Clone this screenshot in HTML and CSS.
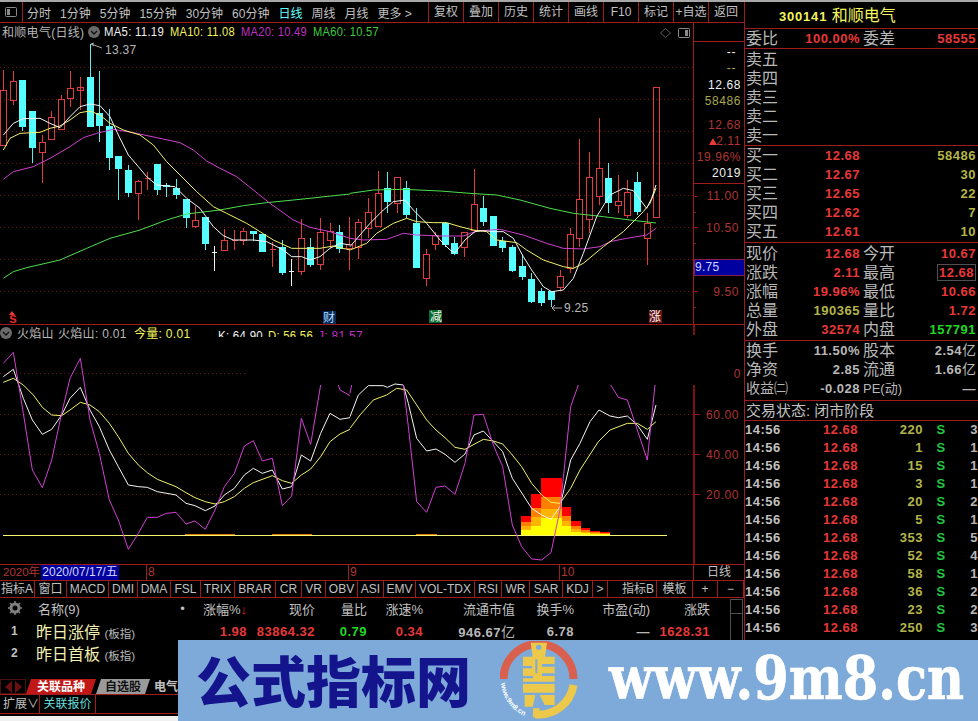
FILE: index.html
```html
<!DOCTYPE html>
<html lang="zh-CN">
<head>
    <meta charset="UTF-8">
    <title>和顺电气 日线</title>
    <link rel="stylesheet" href="styles.css">
</head>
<body>
<div class="app">
    <div class="left">
        <div class="toolbar">
            <div class="tool-icon"><svg width="12" height="10" viewBox="0 0 12 10"><rect class="ico-box" x=".5" y=".5" width="11" height="9" rx="1"/><rect class="ico-fill" x="2" y="2" width="3" height="6"/></svg></div>
            <div class="periods">
                <span>分时</span><span>1分钟</span><span>5分钟</span><span>15分钟</span><span>30分钟</span><span>60分钟</span><span class="on">日线</span><span>周线</span><span>月线</span><span>更多 &gt;</span>
            </div>
            <span class="tool">复权</span><span class="tool">叠加</span><span class="tool">历史</span><span class="tool">统计</span><span class="tool">画线</span><span class="tool">F10</span><span class="tool">标记</span><span class="tool">+自选</span><span class="tool">返回</span>
        </div>

        <svg class="chart" width="744" height="541" viewBox="0 23 744 541">
            <!-- grid -->
            <path class="grid" d="M0 67.5H693M0 99.5H693M0 131.5H693M0 163.5H693M0 195.5H693M0 227.5H693M0 259.5H693M0 291.5H693M0 373.5H245M0 414.5H693M0 454.5H693M0 494.5H693"/>

            <!-- candles -->
            <path class="wick-dn" d="M22.5 80V131M32.5 111V163M90.5 44V127M99.5 71V142M109.5 109V170M118.5 156V200M128.5 165V197M157.5 164V195M166.5 183V197M176.5 179V199M186.5 199V228M205.5 217V250M253.5 231V241M282.5 240V275M310.5 238V267M339.5 225V253M387.5 172V213M406.5 181V218M416.5 208V268M445.5 222V247M454.5 237V255M483.5 196V226M502.5 237V252M512.5 245V272M522.5 255V280M531.5 273V303M541.5 288V306M551.5 291V307M608.5 163V213M637.5 172V215"/>
            <path class="body-dn" d="M19 80h7v47h-7zM29 111h7v37h-7zM87 77h7v50h-7zM96 113h7v13h-7zM106 126h7v32h-7zM115 156h7v13h-7zM125 170h7v23h-7zM154 164h7v26h-7zM163 185h7v2h-7zM173 188h7v7h-7zM183 199h7v19h-7zM202 217h7v27h-7zM250 231h7v3h-7zM259 234h7v18h-7zM279 247h7v26h-7zM307 247h7v18h-7zM336 232h7v17h-7zM384 188h7v14h-7zM403 188h7v27h-7zM413 223h7v45h-7zM442 223h7v22h-7zM451 243h7v11h-7zM480 208h7v14h-7zM490 216h7v30h-7zM499 241h7v7h-7zM509 247h7v24h-7zM519 266h7v11h-7zM528 279h7v23h-7zM538 291h7v12h-7zM548 291h7v9h-7zM605 178h7v25h-7zM634 182h7v30h-7z"/>
            <path class="candle-up" d="M3.5 70V90M.5 90h6V145h-6zM13.5 71V81M13.5 100V105M10.5 81h6V100h-6zM42.5 135V142M42.5 152V183M39.5 142h6V152h-6zM51.5 111V117M48.5 117h6V139h-6zM61.5 95V99M58.5 99h6V129h-6zM70.5 71V88M70.5 98V107M67.5 88h6V98h-6zM80.5 77V110M77.5 87h6V90h-6zM138.5 180V181M138.5 193V220M135.5 181h6V193h-6zM147.5 172V190M144.5 178h6M195.5 206V220M195.5 226V228M192.5 220h6V226h-6zM224.5 229V240M221.5 240h6V250h-6zM234.5 230V250M231.5 240h6M243.5 228V231M243.5 240V245M240.5 231h6V240h-6zM272.5 242V267M269.5 249h6M301.5 219V238M301.5 271V275M298.5 238h6V271h-6zM320.5 218V232M320.5 264V270M317.5 232h6V264h-6zM330.5 223V231M330.5 240V248M327.5 231h6V240h-6zM349.5 217V244M349.5 248V270M346.5 244h6V248h-6zM358.5 219V222M358.5 247V259M355.5 222h6V247h-6zM368.5 198V212M368.5 228V238M365.5 212h6V228h-6zM378.5 171V193M375.5 193h6V226h-6zM397.5 203V213M394.5 177h6V203h-6zM426.5 249V254M426.5 278V286M423.5 254h6V278h-6zM435.5 232V235M435.5 244V250M432.5 235h6V244h-6zM464.5 247V257M461.5 232h6V247h-6zM474.5 169V204M474.5 230V233M471.5 204h6V230h-6zM560.5 270V276M560.5 287V290M557.5 276h6V287h-6zM570.5 228V234M570.5 268V273M567.5 234h6V268h-6zM579.5 139V199M579.5 238V247M576.5 199h6V238h-6zM589.5 152V177M589.5 219V233M586.5 177h6V219h-6zM599.5 118V168M599.5 196V205M596.5 168h6V196h-6zM618.5 175V201M618.5 205V213M615.5 201h6V205h-6zM627.5 180V192M627.5 215V218M624.5 192h6V215h-6zM647.5 213V223M647.5 238V265M644.5 223h6V238h-6zM653.5 87h6V217h-6z"/>
            <path class="candle-white" d="M214.5 246V271M212 252.5h5M291.5 259V286M289 271.5h5"/>

            <!-- MA lines, left half -->
            <g transform="translate(0 60) scale(.33333)">
                <polyline class="ln ln-green" points="10,655 40,635 80,623 180,600 260,565 330,535 420,510 500,480 560,462 660,450 730,437 800,428 900,418 1050,402"/>
                <polyline class="ln ln-mag" points="10,358 40,335 100,320 150,295 210,260 250,233 290,220 340,208 400,218 470,233 540,248 580,270 620,303 660,325 710,350 760,390 810,430 880,480 930,502 990,515 1050,535"/>
                <polyline class="ln ln-yel" points="10,270 30,235 60,220 120,217 150,205 180,198 210,180 240,158 270,153 300,165 330,190 370,210 420,225 460,255 500,305 540,345 590,395 640,440 680,460 740,490 780,515 820,540 875,565 960,565 1000,558 1050,570"/>
                <polyline class="ln ln-white" points="10,225 40,190 70,176 120,175 150,190 180,203 210,170 240,140 270,132 300,137 330,170 355,225 385,285 415,320 440,350 470,375 525,380 560,415 600,445 640,500 670,527 700,540 760,540 800,545 850,570 875,590 905,590 930,600 960,590 990,565 1020,550 1050,555"/>
            </g>
            <!-- MA lines, right half -->
            <g transform="translate(350 100) scale(.33333)">
                <polyline class="ln ln-green" points="0,280 70,270 160,268 270,273 360,280 440,285 510,300 600,325 670,340 760,350 840,360 918,369"/>
                <polyline class="ln ln-mag" points="0,415 40,420 110,418 160,400 200,405 270,408 340,408 380,393 450,388 520,405 590,430 640,445 700,447 750,440 780,425 830,415 890,405 918,385"/>
                <polyline class="ln ln-yel" points="0,450 50,430 80,400 130,370 170,355 200,365 250,368 290,368 330,380 370,390 410,395 440,420 500,428 530,450 580,480 640,500 670,505 700,490 760,440 820,395 880,335 900,310 918,265"/>
                <polyline class="ln ln-white" points="0,440 30,405 60,370 100,330 130,305 165,300 190,330 230,370 270,420 300,450 315,458 345,420 375,395 400,392 430,395 460,395 490,415 520,470 545,510 580,560 605,575 640,570 670,535 700,460 740,350 780,285 820,265 850,272 890,325 905,295 918,255"/>
            </g>

            <!-- price legend -->
            <text class="t t-grey" x="2" y="37">和顺电气(日线)</text>
            <circle class="knob" cx="94" cy="32" r="6"/><path class="knob-mark" d="M91 31l3 3 3-3"/>
            <text class="t t-white" x="104" y="36" textLength="60" lengthAdjust="spacingAndGlyphs">MA5: 11.19</text>
            <text class="t t-yel" x="170" y="36" textLength="65" lengthAdjust="spacingAndGlyphs">MA10: 11.08</text>
            <text class="t t-mag" x="241" y="36" textLength="66" lengthAdjust="spacingAndGlyphs">MA20: 10.49</text>
            <text class="t t-green" x="313" y="36" textLength="66" lengthAdjust="spacingAndGlyphs">MA60: 10.57</text>
            <path class="diamond" d="M665.5 28.5l5 4.5-5 4.5-5-4.5z"/>
            <rect class="ico-box" x="678.5" y="28.5" width="11" height="9" rx="1"/><rect class="ico-fill" x="685" y="30" width="3" height="6"/>

            <path class="pointer" d="M91 44l3-1M91 44l3 2M91 44l11 4M552 308l3-3M552 308l3 3M552 308h10"/>
            <text class="t t-grey" x="105" y="54">13.37</text>
            <text class="t t-grey" x="564" y="312">9.25</text>

            <!-- signals -->
            <path class="tri" d="M12 311l3 4h-6z"/>
            <text class="t t-bold t-red" x="9" y="323">s</text>
            <rect class="sig-blue" x="323" y="311" width="13" height="13"/><text class="t t-cyan" x="323" y="322">财</text>
            <rect class="sig-green" x="429" y="310" width="13" height="13"/><text class="t t-white" x="430" y="321">减</text>
            <rect class="sig-red" x="649" y="310" width="13" height="13"/><text class="t t-white" x="649" y="321">涨</text>

            <!-- panel frame and axis -->
            <path class="frame" d="M0 324.5H744M693.5 23V324M693 41.5H744M693 183.5H744"/>
            <path class="axis-sub" d="M694 325V335M694 385V564"/>
            <path class="tick" d="M693 196H698M693 212H696M693 227H698M693 243H696M693 291H698M693 275H696M693 307H696M694 414H700M694 454H700M694 494H700"/>

            <text class="ax t-white" x="736" y="56">--</text>
            <text class="ax t-olive" x="736" y="72">--</text>
            <text class="ax t-white" x="741" y="89">12.68</text>
            <text class="ax t-olive" x="741" y="105">58486</text>
            <text class="ax t-dim" x="741" y="129">12.68</text>
            <text class="ax t-dim" x="741" y="145">2.11</text>
            <path class="tri" d="M709 145l4-7 4 7z"/>
            <text class="ax t-dim" x="741" y="161">19.96%</text>
            <text class="ax t-white" x="741" y="177">2019</text>
            <text class="ax t-dim" x="739" y="200">11.00</text>
            <text class="ax t-dim" x="739" y="232">10.50</text>
            <text class="ax t-dim" x="739" y="296">9.50</text>
            <rect class="price-tag" x="694.5" y="259.5" width="50" height="16"/>
            <text class="t t-pale" x="695" y="271">9.75</text>

            <!-- flame bars -->
            <g transform="translate(350 360) scale(.33333)" shape-rendering="crispEdges">
                <path class="fl fl-red" d="M513 468h30v17h-30zM543 403h30v40h-30zM573 353h62v57h-62zM635 440h28v28h-28zM663 482h30v15h-30zM693 503h27v7h-27zM720 512h30v5h-30zM750 517h30v3h-30zM780 521h60v2h-60z"/>
                <path class="fl fl-org" d="M513 485h30v12h-30zM543 443h30v27h-30zM573 410h62v38h-62zM635 468h28v14h-28zM663 497h30v10h-30zM693 510h27v5h-27zM720 517h30v3h-30zM750 520h30v2h-30z"/>
                <path class="fl fl-amb" d="M513 497h30v13h-30zM543 470h30v27h-30zM573 448h62v27h-62zM635 482h28v15h-28zM663 507h30v8h-30zM693 515h27v5h-27zM720 520h30v2h-30z"/>
                <path class="fl fl-yel" d="M513 510h30v15h-30zM543 497h30v28h-30zM573 475h62v50h-62zM635 497h28v28h-28zM663 515h30v10h-30zM693 520h27v5h-27zM720 522h60v3h-60z"/>
            </g>
            <path class="base-orange" d="M185 534.5H235M272 534.5H312M416 534.5H437"/>
            <path class="base" d="M3 535.5H667"/>

            <!-- KDJ lines, left half -->
            <g transform="translate(0 320) scale(.33333)">
                <polyline class="ln ln-yel" points="10,187 40,175 70,195 100,225 127,262 155,285 185,287 210,270 241,247 270,255 298,275 328,310 355,350 385,400 415,435 442,458 472,478 528,500 558,518 585,533 616,545 645,552 673,545 703,530 733,505 760,488 817,467 847,482 875,490 904,465 932,447 962,410 990,365 1020,342 1050,328"/>
                <polyline class="ln ln-white" points="10,170 40,148 70,235 97,300 127,343 155,328 185,285 210,235 241,202 270,270 298,320 328,390 355,440 385,495 415,500 442,502 472,515 528,525 558,550 585,557 616,572 645,558 673,525 703,505 733,465 760,445 787,460 817,450 847,507 875,500 904,405 932,423 962,340 990,280 1020,298 1050,293"/>
                <polyline class="ln ln-mag" points="10,130 40,97 70,280 97,450 127,503 155,420 185,280 210,175 241,115 270,300 298,400 328,540 355,600 385,688 415,640 442,592 472,592 499,580 528,577 558,612 585,603 616,628 645,570 673,500 703,460 733,378 760,362 787,423 817,415 847,557 875,528 904,295 932,373 962,195"/>
                <polyline class="ln ln-mag" points="1015,195 1020,210 1050,227"/>
            </g>
            <!-- KDJ lines, right half -->
            <g transform="translate(350 360) scale(.33333)">
                <polyline class="ln ln-yel" points="0,205 30,165 70,120 110,105 140,85 170,90 200,135 230,180 258,210 285,233 315,262 345,268 372,253 400,238 430,243 458,252 487,285 515,320 545,370 575,405 603,427 630,430 662,385 690,330 745,245 780,210 832,190 862,190 892,208 918,185"/>
                <polyline class="ln ln-white" points="0,170 25,105 55,77 100,77 112,82 135,72 160,75 175,130 200,235 230,273 258,267 285,283 315,307 345,282 372,225 400,213 430,245 458,275 487,355 545,445 575,465 603,478 630,440 662,300 690,250 720,185 747,150 780,168 805,173 832,168 862,195 892,238 918,135"/>
                <polyline class="ln ln-mag" points="0,100 5,75"/>
                <polyline class="ln ln-mag" points="160,75 175,200 200,425 230,457 258,382 285,378 315,403 345,310 372,165 400,163 430,255 458,320 487,495 515,560 545,597 575,600 603,578 630,450 662,140 685,75"/>
                <polyline class="ln ln-mag" points="782,75 805,112 832,120 862,210 892,300 915,75"/>
            </g>

            <!-- sub panel legend -->
            <circle class="knob" cx="6" cy="333" r="6"/><path class="knob-mark" d="M3 332l3 3 3-3"/>
            <text class="t t-grey" x="17" y="338">火焰山</text>
            <text class="t t-grey" x="58" y="338">火焰山: 0.01</text>
            <text class="t t-yel" x="134" y="338">今量: 0.01</text>
            <text class="t t-white" x="218" y="340" textLength="45" lengthAdjust="spacingAndGlyphs">K: 64.90</text>
            <text class="t t-yel" x="268" y="340" textLength="45" lengthAdjust="spacingAndGlyphs">D: 56.56</text>
            <text class="t t-mag" x="318" y="340" textLength="45" lengthAdjust="spacingAndGlyphs">J: 81.57</text>
            <rect class="mask" x="210" y="337" width="160" height="6"/>

            <text class="ax t-dim" x="741" y="378">0</text>
            <text class="ax t-dim" x="739" y="419">60.00</text>
            <text class="ax t-dim" x="739" y="459">40.00</text>
            <text class="ax t-dim" x="739" y="499">20.00</text>
        </svg>

        <div class="datebar">
            <div class="dseg dseg-first"><span class="year">2020年</span><span class="cursor-date">2020/07/17/五</span></div>
            <div class="dseg dseg-8">8</div>
            <div class="dseg dseg-9">9</div>
            <div class="dseg dseg-10">10</div>
            <div class="dseg-cycle">日线</div>
        </div>

        <div class="itabs">
            <span class="w35">指标A</span><span class="w32">窗口</span><span class="w42">MACD</span><span class="w29">DMI</span><span class="w33">DMA</span><span class="w30">FSL</span><span class="w34">TRIX</span><span class="w41">BRAR</span><span class="w26">CR</span><span class="w24">VR</span><span class="w32">OBV</span><span class="w26">ASI</span><span class="w32">EMV</span><span class="w59">VOL-TDX</span><span class="w27">RSI</span><span class="w28">WR</span><span class="w33">SAR</span><span class="w30">KDJ</span><span class="w15">&gt;</span><span class="w50 grow">指标B</span><span class="w36">模板</span><span class="w25">+</span><span class="w26">−</span>
        </div>

        <div class="table">
            <div class="trow thead">
                <span class="gear"><svg width="14" height="14" viewBox="0 0 14 14"><path class="gear-teeth" d="M7 0V14M0 7H14M2 2L12 12M12 2L2 12"/><circle class="gear-ring" cx="7" cy="7" r="4"/></svg></span>
                <span class="cname-h">名称(9)</span><span class="cdot">•</span>
                <span class="r">涨幅%<b class="sort">↓</b></span><span class="r">现价</span><span class="r">量比</span><span class="r">涨速%</span><span class="r">流通市值</span><span class="r">换手%</span><span class="r">市盈(动)</span><span class="r">涨跌</span>
            </div>
            <div class="trow">
                <span class="rank">1</span><span class="cname">昨日涨停 <small>(板指)</small></span><span class="cdot"></span>
                <span class="r n red">1.98</span><span class="r n red">83864.32</span><span class="r n green">0.79</span><span class="r n red">0.34</span><span class="r n grey">946.67<i>亿</i></span><span class="r n grey">6.78</span><span class="r n grey">—</span><span class="r n red">1628.31</span>
            </div>
            <div class="trow">
                <span class="rank">2</span><span class="cname">昨日首板 <small>(板指)</small></span>
            </div>
            <div class="scroll"><span class="scroll-up"></span></div>
        </div>

        <div class="sheets">
            <span class="arrows"><i class="arr-l"></i><i class="arr-r"></i></span>
            <span class="sheet sheet-on">关联品种</span><span class="sheet">自选股</span><span class="sheet sheet-off">电气</span>
        </div>
        <div class="extras"><span class="ext">扩展∨</span><span class="ext ext-link">关联报价</span></div>
    </div>

    <div class="right">
        <div class="title"><b>300141</b> 和顺电气</div>
        <div class="qrow wei"><span>委比</span><b class="r red">100.00%</b><span class="lb2">委差</span><b class="r red">58555</b></div>

        <div class="block asks">
            <div class="qrow"><span>卖五</span></div>
            <div class="qrow"><span>卖四</span></div>
            <div class="qrow"><span>卖三</span></div>
            <div class="qrow"><span>卖二</span></div>
            <div class="qrow"><span>卖一</span></div>
        </div>
        <div class="block bids">
            <div class="qrow"><span>买一</span><b class="r red">12.68</b><span></span><b class="r olive">58486</b></div>
            <div class="qrow"><span>买二</span><b class="r red">12.67</b><span></span><b class="r olive">30</b></div>
            <div class="qrow"><span>买三</span><b class="r red">12.65</b><span></span><b class="r olive">22</b></div>
            <div class="qrow"><span>买四</span><b class="r red">12.62</b><span></span><b class="r olive">7</b></div>
            <div class="qrow"><span>买五</span><b class="r red">12.61</b><span></span><b class="r olive">10</b></div>
        </div>
        <div class="block quotes">
            <div class="qrow"><span>现价</span><b class="r red">12.68</b><span class="lb2">今开</span><b class="r red">10.67</b></div>
            <div class="qrow"><span>涨跌</span><b class="r red">2.11</b><span class="lb2">最高</span><b class="r red"><em class="high">12.68</em></b></div>
            <div class="qrow"><span>涨幅</span><b class="r red">19.96%</b><span class="lb2">最低</span><b class="r red">10.66</b></div>
            <div class="qrow"><span>总量</span><b class="r olive">190365</b><span class="lb2">量比</span><b class="r red">1.72</b></div>
            <div class="qrow"><span>外盘</span><b class="r red">32574</b><span class="lb2">内盘</span><b class="r green">157791</b></div>
        </div>
        <div class="block stats">
            <div class="qrow"><span>换手</span><b class="r grey">11.50%</b><span class="lb2">股本</span><b class="r grey">2.54<i>亿</i></b></div>
            <div class="qrow"><span>净资</span><b class="r grey">2.85</b><span class="lb2">流通</span><b class="r grey">1.66<i>亿</i></b></div>
            <div class="qrow"><span class="eps">收益㈡</span><b class="r grey">-0.028</b><span class="lb2 pe">PE(动)</span><b class="r grey">—</b></div>
        </div>
        <div class="status">交易状态: 闭市阶段</div>

        <div class="ticks">
            <div class="tick-row"><b>14:56</b><b class="r red">12.68</b><b class="r olive">220</b><b class="s">S</b><b class="r grey">3</b></div>
            <div class="tick-row"><b>14:56</b><b class="r red">12.68</b><b class="r olive">1</b><b class="s">S</b><b class="r grey">1</b></div>
            <div class="tick-row"><b>14:56</b><b class="r red">12.68</b><b class="r olive">15</b><b class="s">S</b><b class="r grey">1</b></div>
            <div class="tick-row"><b>14:56</b><b class="r red">12.68</b><b class="r olive">3</b><b class="s">S</b><b class="r grey">1</b></div>
            <div class="tick-row"><b>14:56</b><b class="r red">12.68</b><b class="r olive">20</b><b class="s">S</b><b class="r grey">2</b></div>
            <div class="tick-row"><b>14:56</b><b class="r red">12.68</b><b class="r olive">5</b><b class="s">S</b><b class="r grey">1</b></div>
            <div class="tick-row"><b>14:56</b><b class="r red">12.68</b><b class="r olive">353</b><b class="s">S</b><b class="r grey">5</b></div>
            <div class="tick-row"><b>14:56</b><b class="r red">12.68</b><b class="r olive">52</b><b class="s">S</b><b class="r grey">4</b></div>
            <div class="tick-row"><b>14:56</b><b class="r red">12.68</b><b class="r olive">58</b><b class="s">S</b><b class="r grey">1</b></div>
            <div class="tick-row"><b>14:56</b><b class="r red">12.68</b><b class="r olive">36</b><b class="s">S</b><b class="r grey">2</b></div>
            <div class="tick-row"><b>14:56</b><b class="r red">12.68</b><b class="r olive">23</b><b class="s">S</b><b class="r grey">2</b></div>
            <div class="tick-row"><b>14:56</b><b class="r red">12.68</b><b class="r olive">250</b><b class="s">S</b><b class="r grey">3</b></div>
        </div>
    </div>
</div>

<div class="watermark">
    <span class="wm-title">公式指标网</span>
    <svg class="wm-logo" width="80" height="80" viewBox="0 0 80 80">
        <path class="logo-red" d="M3.500 38A35 35 0 0 1 73.500 38"/>
        <path class="logo-gold" d="M73.500 44A35 35 0 0 1 35 73.300"/>
        <g transform="translate(-2 -1) scale(.33333)">
            <path class="logo-fig" d="M98 8H147L141 50H170V125H75V50H104zM75 132H170V158H75zM80 165H112L104 200H80zM125 165H170V195H140zM105 205H125L120 232H105z"/>
            <circle class="logo-hole" cx="122" cy="22" r="8"/>
            <path class="logo-hole" d="M75 78H102V85H75zM112 58H118V100H112zM132 72H170V80H132zM75 108H105V115H75zM132 100H170V108H132z"/>
        </g>
        <path id="logoArc" class="logo-none" d="M1 42A38 38 0 0 0 32 77"/>
        <text class="logo-text"><textPath href="#logoArc">www.9m8.cn</textPath></text>
    </svg>
    <span class="wm-url">www.9m8.cn</span>
</div>
</body>
</html>
```

FILE: styles.css
```css
* {
    box-sizing: border-box;
}

html, body {
    margin: 0;
    padding: 0;
    height: 721px;
    overflow: hidden;
    background-color: #f0f0f0;
}

body {
    position: relative;
    font-family: "Liberation Sans", "Noto Sans CJK SC", sans-serif;
    color: #c0c0c0;
    font-size: 12px;
}

.app {
    display: flex;
    height: 716px;
    background-color: #000;
    border-top: 2px solid #a8a8a8;
}

.left {
    width: 745px;
    flex: none;
    display: flex;
    flex-direction: column;
    border-right: 1px solid #a01c1c;
}

.right {
    flex: 1;
    min-width: 0;
    overflow: hidden;
}

/* toolbar */
.toolbar {
    height: 21px;
    flex: none;
    display: flex;
    align-items: center;
    border-bottom: 1px solid #a01c1c;
    white-space: nowrap;
}

.tool-icon {
    width: 23px;
    height: 20px;
    display: flex;
    align-items: center;
    padding-left: 5px;
    border-right: 1px solid #a01c1c;
}

.periods {
    width: 405px;
    display: flex;
    gap: 9px;
    padding-left: 4px;
}

.periods .on {
    color: #66ffff;
}

.tool {
    width: 35px;
    height: 20px;
    line-height: 20px;
    text-align: center;
    border-left: 1px solid #a01c1c;
}

.ico-box {
    fill: none;
    stroke: #8a8a8a;
}

.ico-fill {
    fill: #8a8a8a;
}

/* chart */
.chart {
    display: block;
    flex: none;
    background-color: #000;
}

.grid {
    fill: none;
    stroke: #6e1414;
    stroke-dasharray: 1 3;
}

.wick-dn {
    fill: none;
    stroke: #55eeee;
    shape-rendering: crispEdges;
}

.body-dn {
    fill: #55ffff;
    shape-rendering: crispEdges;
}

.candle-up {
    fill: none;
    stroke: #e03c3c;
    shape-rendering: crispEdges;
}

.candle-white {
    fill: none;
    stroke: #f4f4f4;
    shape-rendering: crispEdges;
}

.ln {
    fill: none;
    stroke-width: 1;
    vector-effect: non-scaling-stroke;
}

.ln-white { stroke: #f4f4f4; }
.ln-yel { stroke: #f2f26a; }
.ln-mag { stroke: #d040d0; }
.ln-green { stroke: #4de04d; }

.t {
    font-size: 12px;
    letter-spacing: .3px;
}

.t-bold {
    font-weight: bold;
    font-size: 14px;
}

.ax {
    font-size: 12px;
    letter-spacing: .6px;
    text-anchor: end;
}

.t-white { fill: #f0f0f0; }
.t-grey { fill: #b8b8b8; }
.t-yel { fill: #f4f45c; }
.t-mag { fill: #c030c0; }
.t-green { fill: #3ccc3c; }
.t-red { fill: #e02828; }
.t-cyan { fill: #a8dcff; }
.t-olive { fill: #a8a850; }
.t-dim { fill: #b03434; }
.t-pale { fill: #c8d8ff; }

.knob {
    fill: #6a6a6a;
}

.knob-mark {
    fill: none;
    stroke: #111;
    stroke-width: 1.3;
}

.diamond {
    fill: none;
    stroke: #5a5a5a;
}

.pointer {
    fill: none;
    stroke: #a8a8a8;
}

.sig-blue { fill: #0a2a5a; }
.sig-green { fill: #0a6a2a; }
.sig-red { fill: #6a1414; }

.frame {
    fill: none;
    stroke: #a01c1c;
    shape-rendering: crispEdges;
}

.axis-sub {
    fill: none;
    stroke: #7a1010;
    stroke-width: 2;
    shape-rendering: crispEdges;
}

.tick {
    fill: none;
    stroke: #8c1818;
    shape-rendering: crispEdges;
}

.tri {
    fill: #e83838;
}

.price-tag {
    fill: #0000a0;
    stroke: #8a1c4a;
}

.fl { shape-rendering: crispEdges; }
.fl-red { fill: #ff0000; }
.fl-org { fill: #ff8000; }
.fl-amb { fill: #ffb400; }
.fl-yel { fill: #ffff00; }

.base {
    stroke: #f6f66e;
    shape-rendering: crispEdges;
}

.base-orange {
    stroke: #e0780c;
    stroke-width: 1;
    shape-rendering: crispEdges;
}

.mask {
    fill: #000;
}

/* date axis */
.datebar {
    height: 17px;
    flex: none;
    display: flex;
    border-top: 1px solid #a01c1c;
    border-bottom: 1px solid #a01c1c;
    color: #b03434;
    line-height: 15px;
    white-space: nowrap;
}

.dseg {
    border-left: 1px solid #a01c1c;
    padding-left: 1px;
}

.dseg-first {
    width: 146px;
    border-left: 0;
    padding-left: 3px;
    display: flex;
}

.dseg-8 { width: 202px; }
.dseg-9 { width: 211px; }
.dseg-10 { width: 134px; }

.year {
    width: 38px;
    flex: none;
    font-size: 11.5px;
}

.cursor-date {
    width: 78px;
    background-color: #0000a0;
    color: #d8d8ff;
    text-align: center;
}

.dseg-cycle {
    flex: 1;
    text-align: center;
    color: #c0c0c0;
    border-left: 1px solid #a01c1c;
}

/* indicator tabs */
.itabs {
    height: 17px;
    flex: none;
    display: flex;
    border-bottom: 1px solid #a01c1c;
    line-height: 16px;
    white-space: nowrap;
}

.itabs span {
    flex: none;
    text-align: center;
    border-right: 1px solid #a01c1c;
    font-size: 12px;
}

.itabs .grow {
    flex: 1;
    text-align: right;
    padding-right: 2px;
}

.w15 { width: 15px; }
.w24 { width: 24px; }
.w25 { width: 25px; }
.w26 { width: 26px; }
.w27 { width: 27px; }
.w28 { width: 28px; }
.w29 { width: 29px; }
.w30 { width: 30px; }
.w32 { width: 32px; }
.w33 { width: 33px; }
.w34 { width: 34px; }
.w35 { width: 35px; }
.w36 { width: 36px; }
.w41 { width: 41px; }
.w42 { width: 42px; }
.w50 { width: 50px; }
.w59 { width: 59px; }

/* quote list */
.table {
    position: relative;
    height: 82px;
    flex: none;
    margin-top: -1px;
}

.trow {
    display: grid;
    grid-template-columns: 32px 143px 15px 57px 68px 52px 56px 92px 59px 76px 60px;
    height: 22px;
    align-items: center;
    white-space: nowrap;
}

.thead {
    font-size: 13px;
}

.r {
    text-align: right;
}

.gear {
    padding-left: 8px;
    height: 14px;
}

.gear-ring {
    fill: #000;
    stroke: #808080;
    stroke-width: 3;
}

.gear-teeth {
    stroke: #808080;
    stroke-width: 1.5;
}

.cname-h {
    padding-left: 6px;
}

.cdot {
    text-align: center;
}

.sort {
    color: #e02020;
    font-weight: normal;
}

.rank {
    padding-left: 11px;
    font-weight: bold;
}

.cname {
    padding-left: 4px;
    font-size: 16px;
    color: #f2f2b0;
}

.cname small {
    font-size: 11.5px;
    color: #b8b8b8;
}

.n {
    font-weight: bold;
    font-size: 13px;
    letter-spacing: .5px;
}

.n i {
    font-style: normal;
    font-weight: normal;
    font-size: 14px;
    letter-spacing: 0;
}

.scroll {
    position: absolute;
    left: 730px;
    top: 2px;
    width: 13px;
    height: 80px;
    border: 1px solid #505050;
}

.scroll-up {
    display: block;
    height: 14px;
    border-bottom: 1px solid #505050;
}

/* sheet tabs */
.sheets {
    height: 16px;
    flex: none;
    display: flex;
    border-bottom: 1px solid #a01c1c;
    white-space: nowrap;
}

.arrows {
    width: 26px;
    display: flex;
    align-items: center;
    justify-content: center;
    gap: 3px;
    border: 1px solid #4a1010;
}

.arr-l, .arr-r {
    width: 0;
    height: 0;
    border-top: 6px solid transparent;
    border-bottom: 6px solid transparent;
}

.arr-l { border-right: 7px solid #6a1010; }
.arr-r { border-left: 7px solid #6a1010; }

.sheet {
    width: 54px;
    background-color: #9a9a9a;
    color: #111;
    font-weight: bold;
    font-size: 12px;
    line-height: 16px;
    text-align: center;
    clip-path: polygon(5px 0, 100% 0, calc(100% - 5px) 100%, 0 100%);
}

.sheet-on {
    width: 70px;
    background-color: #c01818;
    color: #fff;
}

.sheet-off {
    background-color: #000;
    color: #c0c0c0;
    width: 32px;
    text-align: left;
    padding-left: 4px;
}

.extras {
    height: 19px;
    flex: none;
    display: flex;
    line-height: 18px;
    border-bottom: 1px solid #a01c1c;
}

.ext {
    width: 40px;
    padding-left: 3px;
    border-right: 1px solid #a01c1c;
}

.ext-link {
    width: 56px;
    color: #66dddd;
    text-align: center;
    padding-left: 0;
}

/* right panel */
.title {
    height: 27px;
    border-bottom: 1px solid #a01c1c;
    padding-left: 34px;
    line-height: 27px;
    color: #f4f45c;
    font-size: 16px;
}

.title b {
    font-size: 13px;
    letter-spacing: .8px;
}

.qrow {
    display: grid;
    grid-template-columns: 32px 82px 36px 1fr;
    height: 19px;
    line-height: 19px;
    padding: 0 2px 0 1px;
    font-size: 16px;
    color: #b8b8b8;
    white-space: nowrap;
}

.qrow b {
    font-size: 13px;
    letter-spacing: .5px;
}

.qrow i {
    font-style: normal;
    font-weight: normal;
    font-size: 14px;
    letter-spacing: 0;
}

.wei {
    height: 20px;
    border-bottom: 1px solid #a01c1c;
}

.block {
    border-bottom: 1px solid #a01c1c;
}

.asks {
    height: 97px;
    padding-top: 1px;
}

.bids {
    height: 97px;
}

.quotes {
    height: 98px;
    padding-top: 1px;
}

.stats {
    height: 60px;
}

.lb2 {
    padding-left: 3px;
}

.eps {
    font-size: 14px;
}

.pe {
    font-size: 13px;
}

.high {
    font-style: normal;
    border: 1px solid #505050;
    padding: 0 1px;
}

.red { color: #e83838; }
.olive { color: #b4b44a; }
.green { color: #20d820; }
.grey { color: #b8b8b8; }

.status {
    height: 20px;
    line-height: 20px;
    padding-left: 1px;
    font-size: 15px;
    border-bottom: 1px solid #a01c1c;
}

.tick-row {
    display: grid;
    grid-template-columns: 41px 72px 65px 36px 1fr;
    height: 18px;
    line-height: 18px;
    font-size: 13px;
    letter-spacing: .5px;
}

.s {
    color: #20c840;
    text-align: center;
}

/* watermark banner */
.watermark {
    position: absolute;
    left: 178px;
    right: 0;
    top: 640px;
    bottom: 0;
    display: flex;
    align-items: center;
    background-color: #7daad9;
}

.wm-title {
    width: 322px;
    padding-left: 18px;
    margin-top: -6px;
    font-family: "Noto Sans CJK SC", sans-serif;
    font-weight: 900;
    font-size: 55px;
    line-height: 60px;
    color: #14148c;
    white-space: nowrap;
}

.wm-logo {
    flex: none;
}

.wm-url {
    margin-left: 29px;
    margin-top: -6px;
    font-family: "DejaVu Serif", serif;
    font-weight: bold;
    font-size: 51px;
    line-height: 60px;
    color: #fff;
    white-space: nowrap;
    -webkit-text-stroke: .6px #fff;
    transform: scaleY(1.18);
}

.logo-red, .logo-gold, .logo-none {
    fill: none;
    stroke-width: 8;
}

.logo-red { stroke: #d9604f; }
.logo-gold { stroke: #ecc94b; }
.logo-none { stroke: none; }

.logo-text {
    font-size: 7px;
    font-weight: bold;
    fill: #fff;
}

.logo-fig {
    fill: #ecc94b;
}

.logo-hole {
    fill: #7daad9;
}
```
